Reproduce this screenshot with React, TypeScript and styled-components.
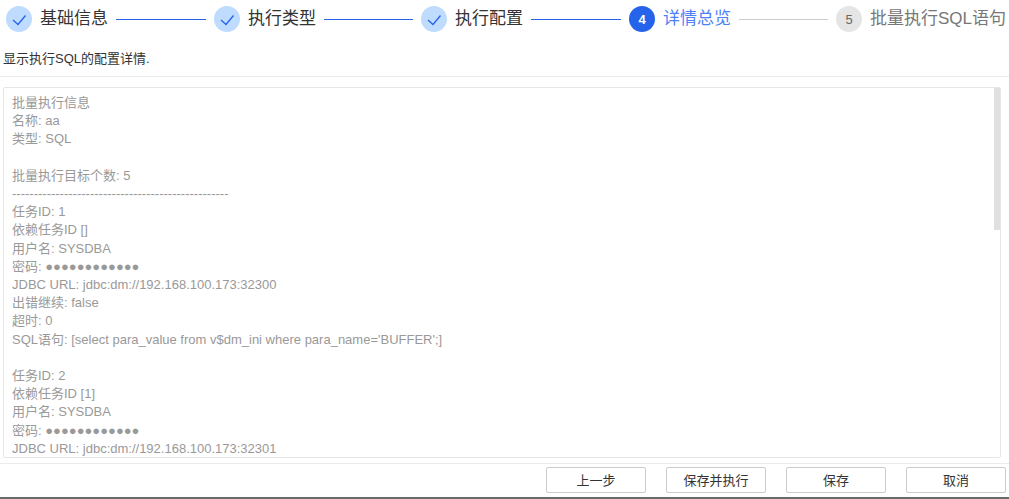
import React from "react";
import styled, { createGlobalStyle } from "styled-components";

const Global = createGlobalStyle`
  html, body { margin: 0; padding: 0; background: #fff; }
  body { font-family: "Liberation Sans", "Noto Sans CJK SC", sans-serif; }
  #root { width: 1009px; height: 499px; overflow: hidden; }
`;

const Page = styled.div`
  width: 1009px;
  height: 499px;
  box-sizing: border-box;
  display: flex;
  flex-direction: column;
  border-bottom: 2px solid #6b6b6b;
  overflow: hidden;
`;

const Stepper = styled.div`
  display: flex;
  align-items: center;
  height: 26px;
  padding: 6px 0 0 6px;
  flex: none;
`;

const Step = styled.div`
  display: flex;
  align-items: center;
  flex: none;
`;

const Circle = styled.div<{ $state: "done" | "active" | "todo" }>`
  width: 26px;
  height: 26px;
  border-radius: 50%;
  display: flex;
  align-items: center;
  justify-content: center;
  font-size: 13px;
  font-weight: ${(p) => (p.$state === "active" ? 700 : 400)};
  margin-right: 8px;
  background: ${(p) =>
    p.$state === "done" ? "#bfdbfe" : p.$state === "active" ? "#2563eb" : "#e5e5e5"};
  color: ${(p) => (p.$state === "active" ? "#fff" : "#666")};
`;

const Label = styled.span<{ $state: "done" | "active" | "todo" }>`
  font-size: 17px;
  line-height: 26px;
  white-space: nowrap;
  color: ${(p) =>
    p.$state === "done" ? "#333" : p.$state === "active" ? "#4d7ff5" : "#777"};
`;

const Connector = styled.div<{ $done: boolean; $w: number }>`
  flex: none;
  height: 1px;
  width: ${(p) => p.$w}px;
  margin: 0 8px;
  background: ${(p) => (p.$done ? "#2563eb" : "#ccc")};
`;

const Hint = styled.div`
  flex: none;
  margin-top: 18px;
  padding-left: 3px;
  font-size: 13px;
  line-height: 18px;
  color: #333;
`;

const Divider = styled.div`
  flex: none;
  height: 1px;
  background: #ebebeb;
`;

const HintDivider = styled(Divider)`
  margin-top: 8px;
`;

const DetailFrame = styled.div`
  flex: none;
  position: relative;
  width: 998px;
  height: 371px;
  margin: 10px 0 5px 3px;
`;

const Detail = styled.textarea`
  display: block;
  width: 100%;
  height: 100%;
  box-sizing: border-box;
  border: 1px solid #e6e6e6;
  border-radius: 2px;
  padding: 6px 8px 4px;
  outline: none;
  resize: none;
  background: #fff;
  color: #999;
  font-family: "Liberation Sans", "Noto Sans CJK SC", sans-serif;
  font-size: 13px;
  line-height: 18.2px;
  overflow-y: hidden;
`;

const ScrollThumb = styled.div`
  position: absolute;
  top: 1px;
  right: 1px;
  width: 6px;
  height: 142px;
  background: #e0e0e0;
`;

const Footer = styled.div`
  flex: none;
  display: flex;
  justify-content: flex-end;
  gap: 20px;
  padding: 3px 3px 0 0;
`;

const Button = styled.button`
  width: 100px;
  height: 26px;
  box-sizing: border-box;
  padding: 0 0 2px;
  border: 1px solid #ccc;
  border-radius: 2px;
  background: #fff;
  color: #333;
  font-family: "Liberation Sans", "Noto Sans CJK SC", sans-serif;
  font-size: 13px;
`;

const Check = () => (
  <svg width="14" height="14" viewBox="0 0 14 14" fill="none" stroke="#2563eb" strokeWidth="1.3">
    <path d="M1 8 L6 12.5 L13.5 3.5" />
  </svg>
);

const task = (id: number, dep: string, port: number) =>
  `任务ID: ${id}\n依赖任务ID [${dep}]\n用户名: SYSDBA\n密码: ●●●●●●●●●●●●\nJDBC URL: jdbc:dm://192.168.100.173:${port}\n出错继续: false\n超时: 0\nSQL语句: [select para_value from v$dm_ini where para_name='BUFFER';]\n\n`;

const content =
  `批量执行信息\n名称: aa\n类型: SQL\n\n批量执行目标个数: 5\n--------------------------------------------------\n` +
  task(1, "", 32300) +
  task(2, "1", 32301) +
  task(3, "2", 32302) +
  task(4, "3", 32303) +
  task(5, "4", 32304);

type S = "done" | "active" | "todo";
const steps: { n: number; text: string; state: S; line: number }[] = [
  { n: 1, text: "基础信息", state: "done", line: 90 },
  { n: 2, text: "执行类型", state: "done", line: 89 },
  { n: 3, text: "执行配置", state: "done", line: 90 },
  { n: 4, text: "详情总览", state: "active", line: 89 },
  { n: 5, text: "批量执行SQL语句", state: "todo", line: 0 },
];

export default function App() {
  return (
    <>
      <Global />
      <Page>
        <Stepper>
          {steps.map((s) => (
            <React.Fragment key={s.n}>
              <Step>
                <Circle $state={s.state}>{s.state === "done" ? <Check /> : s.n}</Circle>
                <Label $state={s.state}>{s.text}</Label>
              </Step>
              {s.line > 0 && <Connector $done={s.state === "done"} $w={s.line} />}
            </React.Fragment>
          ))}
        </Stepper>
        <Hint>显示执行SQL的配置详情.</Hint>
        <HintDivider />
        <DetailFrame>
          <Detail readOnly value={content} />
          <ScrollThumb />
        </DetailFrame>
        <Divider />
        <Footer>
          <Button>上一步</Button>
          <Button>保存并执行</Button>
          <Button>保存</Button>
          <Button>取消</Button>
        </Footer>
      </Page>
    </>
  );
}
